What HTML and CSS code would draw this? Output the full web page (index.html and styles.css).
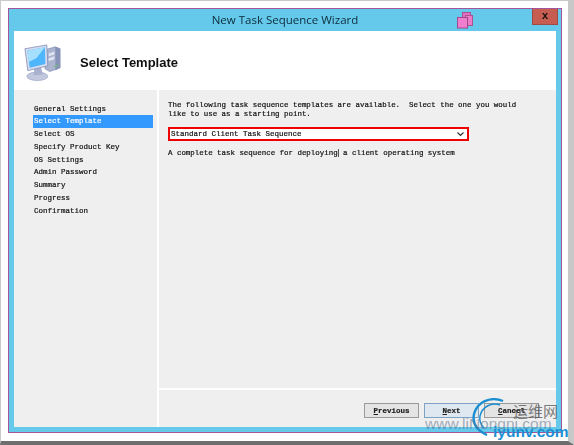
FILE: index.html
```html
<!DOCTYPE html>
<html lang="en">

<head>
  <meta charset="UTF-8">
  <title>New Task Sequence Wizard</title>
  <link rel="stylesheet" href="styles.css">
</head>

<body>
  <div class="photo">
    <div class="window">
      <div class="titlebar">
        <span class="title">New Task Sequence Wizard</span>
        <svg class="title-icon" width="17" height="17" viewBox="0 0 17 17">
          <rect x="5.5" y="0.5" width="8" height="8" fill="#e56fc0" stroke="#a8558f" />
          <rect x="8.5" y="3.5" width="7" height="10" fill="#ea7cc8" stroke="#a8558f" />
          <rect x="0.5" y="5.5" width="10" height="10.5" fill="#f080cf" stroke="#a04a88" />
        </svg>
        <div class="close"><span>x</span></div>
      </div>

      <div class="content">
        <div class="header">
          <svg class="computer" width="38" height="38" viewBox="0 0 40 40">
            <path d="M22 6 L33 3 L38 5 L38 25 L27 29 L22 26 Z" fill="#aab4cf" stroke="#6f7da6" stroke-width="0.6" />
            <path d="M33 3 L38 5 L38 25 L33 28 Z" fill="#8793b8" />
            <path d="M26 10 L32 8 L32 11 L26 13 Z M26 15 L32 13 L32 16 L26 18 Z" fill="#dfe5f3" />
            <path d="M32 24 L36 22" stroke="#6cbf6c" stroke-width="1.2" />
            <ellipse cx="14" cy="34" rx="11" ry="4.5" fill="#c2c8de" stroke="#8e97bb" stroke-width="0.6" />
            <path d="M11 26 L18 25 L20 32 L10 33 Z" fill="#a8b2cf" />
            <path d="M1 5 L24 1 L25 23 L4 28 Z" fill="#d5dcf0" stroke="#7c8ab3" stroke-width="0.8" />
            <path d="M3.5 7 L22 3.5 L22.5 21 L6 25 Z" fill="#4fb6fb" />
            <path d="M3.5 7 L22 3.5 L13 15 L5 19 Z" fill="#a6e0ff" />
          </svg>
          <h1>Select Template</h1>
        </div>

        <div class="body">
          <ul class="steps">
            <li>General Settings</li>
            <li class="active">Select Template</li>
            <li>Select OS</li>
            <li>Specify Product Key</li>
            <li>OS Settings</li>
            <li>Admin Password</li>
            <li>Summary</li>
            <li>Progress</li>
            <li>Confirmation</li>
          </ul>

          <div class="main">
            <div class="pane">
              <p class="intro">The following task sequence templates are available.&nbsp; Select the one you would<br>like to use as a starting point.</p>
              <div class="select">
                <span>Standard Client Task Sequence</span>
                <svg width="7" height="5" viewBox="0 0 7 5">
                  <path d="M0.5 0.5 L3.5 3.5 L6.5 0.5" fill="none" stroke="#333" stroke-width="1.2" />
                </svg>
              </div>
              <p class="desc">A complete task sequence for deploying<span class="caret"></span> a client operating system</p>
            </div>
            <div class="buttons">
              <button class="btn"><u>P</u>revious</button>
              <button class="btn btn-default"><u>N</u>ext</button>
              <button class="btn"><u>C</u>ancel</button>
            </div>
          </div>
        </div>
      </div>
    </div>

    <!-- site watermark, sits over the buttons -->
    <div class="watermark">
      <svg class="swirl" width="32" height="38" viewBox="0 0 32 38">
        <path d="M31 3 C18 -2 5 4 2 16 C0 26 6 33 15 37" fill="none" stroke="#1c8fd0" stroke-width="2.4" />
        <path d="M28 7 C19 4 10 9 8 18 C7 23 9 27 12 30" fill="none" stroke="#1c8fd0" stroke-width="1.5" />
      </svg>
      <span class="wm-cn">运维网</span>
      <span class="wm-url">www.liNongni.com</span>
      <span class="wm-site">iyunv.com</span>
    </div>
  </div>
</body>

</html>
```

FILE: styles.css
```css
* {
  box-sizing: border-box;
}

html,
body {
  margin: 0;
  height: 100%;
  overflow: hidden;
}

.photo {
  position: relative;
  width: 574px;
  height: 445px;
  background: #fff;
  border-top: 1px solid #c9c9c9;
  border-left: 1px solid #c9c9c9;
  border-right: 6px solid #c8c8c8;
  border-bottom: 4px solid #6e6e6e;
  padding: 7px 6px 8px 7px;
}

.window {
  height: 100%;
  display: flex;
  flex-direction: column;
  border: 1px solid #a3569a;
  background: #64c9ea;
  padding: 0 5px 5px 5px;
  filter: blur(0.3px);
}

.titlebar {
  position: relative;
  flex: 0 0 22px;
  display: flex;
  justify-content: center;
  align-items: center;
  font-family: "Open Sans", "Liberation Sans", sans-serif;
  font-size: 11.5px;
  color: #0f2a3a;
}

.title {
  padding-bottom: 1px;
}

.title-icon {
  position: absolute;
  left: 443px;
  top: 3px;
}

.close {
  position: absolute;
  right: -2px;
  top: 0;
  width: 26px;
  height: 16px;
  background: #c75c50;
  border: 1px solid #a04a42;
  border-top: 0;
  display: flex;
  justify-content: center;
  align-items: center;
  font-family: "Liberation Sans", sans-serif;
  font-size: 11px;
  font-weight: bold;
  color: #111;
  line-height: 1;
}

.close span {
  margin-top: -3px;
}

.content {
  flex: 1;
  display: flex;
  flex-direction: column;
  background: #fff;
  min-height: 0;
}

.header {
  flex: 0 0 59px;
  display: flex;
  align-items: center;
  padding: 4px 0 0 10px;
}

.computer {
  flex: none;
}

.header h1 {
  margin: 0 0 0 18px;
  font-family: "Liberation Sans", sans-serif;
  font-size: 13px;
  font-weight: bold;
  color: #111;
}

.body {
  flex: 1;
  display: flex;
  gap: 2px;
  min-height: 0;
  font-family: "Liberation Mono", monospace;
  font-size: 7.5px;
  color: #111;
  -webkit-text-stroke: 0.2px;
}

.steps {
  flex: 0 0 143px;
  margin: 0;
  padding: 12.5px 4px 0 19px;
  list-style: none;
  background: #efefef;
}

.steps li {
  height: 12.75px;
  line-height: 12.75px;
  padding-left: 1px;
}

.steps .active {
  background: #3399ff;
  color: #fff;
}

.main {
  flex: 1;
  display: flex;
  flex-direction: column;
  gap: 2px;
}

.pane {
  flex: 1;
  background: #efefef;
  padding: 11px 0 0 9px;
}

.intro {
  margin: 0;
  line-height: 9px;
  font-size: 7.45px;
}

.select {
  width: 301px;
  height: 14px;
  margin-top: 8px;
  border: 2px solid #f00000;
  background: #fff;
  display: flex;
  justify-content: space-between;
  align-items: center;
  padding: 0 3px 0 1px;
}

.desc {
  margin: 8px 0 0;
  line-height: 9px;
  font-size: 7.45px;
}

.caret {
  display: inline-block;
  width: 0;
  height: 8px;
  vertical-align: -2px;
  border-left: 1px solid #555;
}

.buttons {
  flex: 0 0 37px;
  background: #efefef;
  display: flex;
  justify-content: flex-end;
  align-items: flex-start;
  gap: 5px;
  padding: 13px 17px 0 0;
}

.btn {
  width: 55px;
  height: 15px;
  padding: 0;
  background: #e4e4e4;
  border: 1px solid #9a9a9a;
  font-family: "Liberation Mono", monospace;
  font-size: 7.5px;
  font-weight: bold;
  color: #222;
}

.btn-default {
  background: #dfe8f0;
  border-color: #7da2c4;
}

.watermark {
  position: absolute;
  left: 400px;
  top: 0;
  width: 173px;
  height: 440px;
  pointer-events: none;
}

.swirl {
  position: absolute;
  left: 71px;
  top: 397px;
}

.wm-cn {
  position: absolute;
  left: 112px;
  top: 402px;
  font-family: "Noto Sans CJK SC", sans-serif;
  font-size: 15px;
  line-height: 16px;
  color: rgba(70, 70, 70, 0.7);
}

.wm-url {
  position: absolute;
  left: 24px;
  top: 415px;
  font-family: "Liberation Sans", sans-serif;
  font-size: 15.5px;
  line-height: 16px;
  white-space: nowrap;
  color: rgba(90, 110, 140, 0.55);
}

.wm-site {
  position: absolute;
  left: 92px;
  top: 423px;
  font-family: "Liberation Sans", sans-serif;
  font-size: 15.5px;
  font-weight: bold;
  line-height: 16px;
  color: #1b8fd2;
}
```
